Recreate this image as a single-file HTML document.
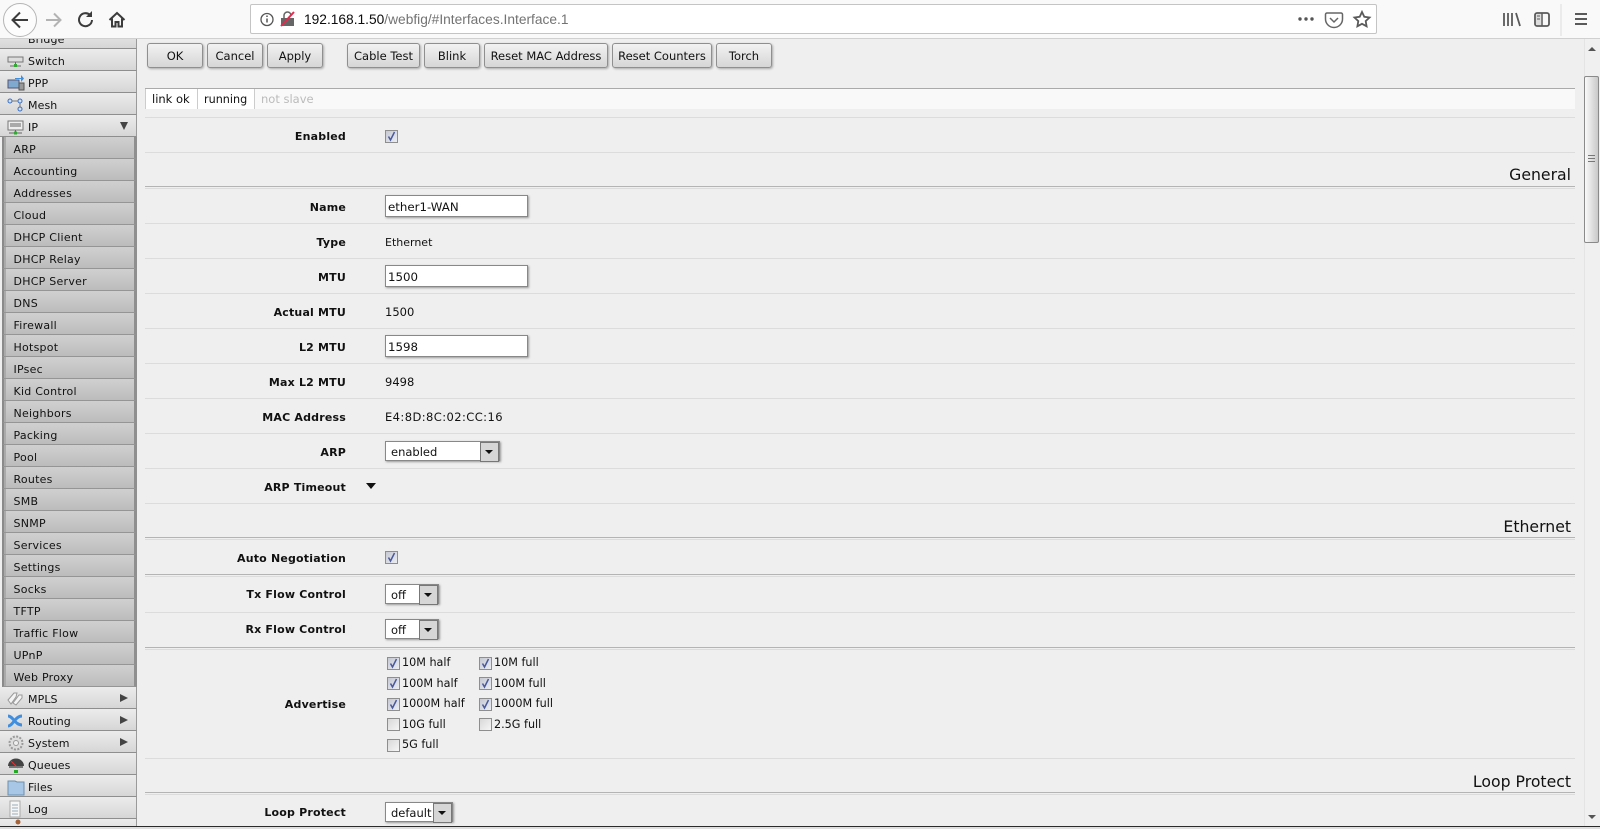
<!DOCTYPE html>
<html><head><meta charset="utf-8"><title>WebFig</title>
<style>
html,body{margin:0;padding:0;width:1600px;height:829px;overflow:hidden;background:#efefef}
body{position:relative;font:11px/14px "DejaVu Sans","Liberation Sans",sans-serif;color:#111}
div,span,svg{position:absolute;box-sizing:border-box;white-space:nowrap}
.it{left:0;width:137px;height:22px;background:linear-gradient(#ececec,#d6d6d6);border-bottom:1px solid #8e8e8e;border-right:1px solid #9a9a9a}
.it span{left:28px;top:6px;letter-spacing:.1px}
.it svg{left:7px;top:3px}
.it i{position:absolute;left:120px;top:7px;width:0;height:0;border-left:8px solid #444;border-top:4px solid transparent;border-bottom:4px solid transparent}
.sub{left:2px;width:135px;height:22px;background:linear-gradient(#d0d0d0,#bcbcbc);border-bottom:1px solid #959595;border-left:2px solid #8a8a8a;border-right:3px solid #8f8f8f;box-shadow:inset 2px 0 0 #aaa}
.sub span{left:9.500px;top:6px;letter-spacing:.25px}
.btn{top:43px;height:25px;border:1px solid #8f8f8f;border-radius:3px;background:linear-gradient(#f2f2f2,#d6d6d6);box-shadow:1px 1px 2px #aaa;text-align:center;line-height:24px;font-size:11.5px}
.ln{left:145px;width:1430px;height:1px;background:#dcdcdc}
.dl{background:#b4b4b4;height:1px;left:145px;width:1430px}
.l{left:140px;width:206px;height:14px;text-align:right;font-weight:bold;margin-top:1px;letter-spacing:.19px}
.v{left:385px;height:14px;font-size:11.5px}
.inp{left:385px;width:143px;height:22px;background:#fff;border:1px solid #888;box-shadow:1px 1px 2px #999;font-size:11.8px;line-height:22px;padding-left:2px}
.sel{left:385px;height:20px;background:#fff;border:1px solid #888;box-shadow:1px 1px 2px #999;font-size:11.5px;line-height:20px;padding-left:5px}
.sel b{position:absolute;right:0;top:0;width:17px;height:18px;background:#d6d6d6;border:1px solid #fff;outline:1px solid #777;outline-offset:-1px}
.sel b:after{content:"";position:absolute;left:4px;top:7px;border-left:4px solid transparent;border-right:4px solid transparent;border-top:4px solid #111}
.cb{width:13px;height:13px;background:linear-gradient(135deg,#d8d8d8,#f6f6f6);border:1px solid #8e8e8e}
.ck{background:linear-gradient(135deg,#c6c8d2,#eceef4)}
.h{right:29px;font-size:15.7px;line-height:20px;color:#111}
.t{height:14px;font-size:11.2px}
</style></head>
<body>

<!-- sidebar -->
<div class="it" style="top:27px;height:22px"><span>Bridge</span></div>
<div class="it" style="top:49px"><svg width="18" height="18" viewBox="0 0 18 18"><rect x="1" y="5" width="15" height="5" fill="#ddd" stroke="#777"/><path d="M8.500 10v4M3 14h11" stroke="#6a6a6a"/><rect x="7" y="12" width="3" height="3" fill="#3a3"/></svg><span>Switch</span></div>
<div class="it" style="top:71px"><svg width="18" height="18" viewBox="0 0 18 18"><rect x="1" y="6" width="11" height="8" fill="#7fa9cf" stroke="#557"/><rect x="12" y="9" width="5" height="7" fill="#999" stroke="#555"/><path d="M8 4h6V1l3 3.500-3 3.500V5H8z" fill="#3d8fe0"/></svg><span>PPP</span></div>
<div class="it" style="top:93px"><svg width="18" height="18" viewBox="0 0 18 18" fill="#cfe0f5" stroke="#3c6fc0"><circle cx="3" cy="5" r="2"/><circle cx="13" cy="5" r="2"/><circle cx="13" cy="13" r="2"/><path d="M5 5h6M13 7v4" fill="none" stroke="#777"/></svg><span>Mesh</span></div>
<div class="it" style="top:115px"><svg width="18" height="18" viewBox="0 0 18 18"><rect x="1" y="3" width="15" height="9" fill="#eee" stroke="#777"/><path d="M3 6h11M3 8h11" stroke="#666"/><path d="M8.500 12v3M2 15h13" stroke="#666"/><rect x="7" y="13.500" width="3" height="3" fill="#3a3"/></svg><span>IP</span><i style="left:120px;top:7px;border:0;border-top:8px solid #444;border-left:4px solid transparent;border-right:4px solid transparent"></i></div>

<div class="sub" style="top:137px"><span>ARP</span></div>
<div class="sub" style="top:159px"><span>Accounting</span></div>
<div class="sub" style="top:181px"><span>Addresses</span></div>
<div class="sub" style="top:203px"><span>Cloud</span></div>
<div class="sub" style="top:225px"><span>DHCP Client</span></div>
<div class="sub" style="top:247px"><span>DHCP Relay</span></div>
<div class="sub" style="top:269px"><span>DHCP Server</span></div>
<div class="sub" style="top:291px"><span>DNS</span></div>
<div class="sub" style="top:313px"><span>Firewall</span></div>
<div class="sub" style="top:335px"><span>Hotspot</span></div>
<div class="sub" style="top:357px"><span>IPsec</span></div>
<div class="sub" style="top:379px"><span>Kid Control</span></div>
<div class="sub" style="top:401px"><span>Neighbors</span></div>
<div class="sub" style="top:423px"><span>Packing</span></div>
<div class="sub" style="top:445px"><span>Pool</span></div>
<div class="sub" style="top:467px"><span>Routes</span></div>
<div class="sub" style="top:489px"><span>SMB</span></div>
<div class="sub" style="top:511px"><span>SNMP</span></div>
<div class="sub" style="top:533px"><span>Services</span></div>
<div class="sub" style="top:555px"><span>Settings</span></div>
<div class="sub" style="top:577px"><span>Socks</span></div>
<div class="sub" style="top:599px"><span>TFTP</span></div>
<div class="sub" style="top:621px"><span>Traffic Flow</span></div>
<div class="sub" style="top:643px"><span>UPnP</span></div>
<div class="sub" style="top:665px"><span>Web Proxy</span></div>

<div class="it" style="top:687px"><svg width="18" height="18" viewBox="0 0 18 18" fill="#f4f4f4" stroke="#999"><path d="M1 10l6-7h3l-1 4-5 7zM6 13l6-8h3l0 3-6 7z"/></svg><span>MPLS</span><i></i></div>
<div class="it" style="top:709px"><svg width="18" height="18" viewBox="0 0 18 18" fill="none" stroke="#3f8ee0" stroke-width="3"><path d="M1 4c5 0 7 9 14 9M1 14c5 0 7-10 14-10"/></svg><span>Routing</span><i></i></div>
<div class="it" style="top:731px"><svg width="18" height="18" viewBox="0 0 18 18" fill="#ddd" stroke="#999"><circle cx="9" cy="9" r="6.500" stroke-width="2" stroke-dasharray="2 1.400"/><circle cx="9" cy="9" r="2.500" fill="#eee"/></svg><span>System</span><i></i></div>
<div class="it" style="top:753px"><svg width="18" height="18" viewBox="0 0 18 18"><path d="M1 10a8 7.500 0 0 1 16 0z" fill="#444"/><path d="M4 5l7 7" stroke="#e33"/><path d="M2 10h14v2H2z" fill="#777"/><rect x="7" y="14" width="4" height="3" fill="#2a2"/></svg><span>Queues</span></div>
<div class="it" style="top:775px"><svg width="18" height="18" viewBox="0 0 18 18"><path d="M1 3h7l2 1h7v13H1z" fill="#a8c7e6" stroke="#6d8fae"/></svg><span>Files</span></div>
<div class="it" style="top:797px"><svg width="18" height="18" viewBox="0 0 18 18"><rect x="3" y="1" width="10" height="16" fill="#f6f6f6" stroke="#aaa"/><path d="M5 5h6M5 8h6M5 11h6M5 14h6" stroke="#9ab"/></svg><span>Log</span></div>
<div class="it" style="top:819px"><svg width="18" height="18" viewBox="0 0 18 18" style="top:0"><circle cx="11" cy="3" r="2.500" fill="#a5633a"/></svg></div>

<!-- buttons -->
<div class="btn" style="left:147px;width:56px">OK</div>
<div class="btn" style="left:207px;width:56px">Cancel</div>
<div class="btn" style="left:267px;width:56px">Apply</div>
<div class="btn" style="left:347px;width:73px">Cable Test</div>
<div class="btn" style="left:424px;width:56px">Blink</div>
<div class="btn" style="left:484px;width:124px">Reset MAC Address</div>
<div class="btn" style="left:612px;width:100px">Reset Counters</div>
<div class="btn" style="left:716px;width:56px">Torch</div>

<!-- status -->
<div style="left:145px;top:88px;width:1430px;height:21px;background:#f9f9f9;border-top:1px solid #aaa"></div>
<div style="left:145px;top:89px;width:53px;height:20px;background:#fff;border-left:1px solid #ccc;border-right:1px solid #ccc"></div>
<div style="left:198px;top:89px;width:57px;height:20px;background:#fff;border-right:1px solid #ccc"></div>
<div class="t" style="left:152px;top:92px;font-size:11.5px">link ok</div>
<div class="t" style="left:204px;top:93px">running</div>
<div class="t" style="left:261px;top:92px;color:#bbb;font-size:11.5px">not slave</div>

<!-- lines -->
<div class="ln" style="top:117px"></div>
<div class="ln" style="top:152px"></div>
<div class="dl" style="top:186px"></div><div class="ln" style="top:188px"></div>
<div class="ln" style="top:223px"></div>
<div class="ln" style="top:258px"></div>
<div class="ln" style="top:293px"></div>
<div class="ln" style="top:328px"></div>
<div class="ln" style="top:363px"></div>
<div class="ln" style="top:398px"></div>
<div class="ln" style="top:433px"></div>
<div class="ln" style="top:468px"></div>
<div class="ln" style="top:503px"></div>
<div class="dl" style="top:537px"></div><div class="ln" style="top:539px"></div>
<div class="dl" style="top:574px"></div><div class="ln" style="top:576px"></div>
<div class="ln" style="top:612px"></div>
<div class="dl" style="top:647px"></div><div class="ln" style="top:649px"></div>
<div class="ln" style="top:758px"></div>
<div class="dl" style="top:792px"></div><div class="ln" style="top:794px"></div>

<!-- headers -->
<div class="h" style="top:165px">General</div>
<div class="h" style="top:517px">Ethernet</div>
<div class="h" style="top:772px">Loop Protect</div>

<!-- labels -->
<div class="l" style="top:129px">Enabled</div>
<div class="cb ck" style="left:385px;top:130px"><svg width="11" height="11" viewBox="0 0 11 11" style="left:0;top:0"><path d="M2.500 5.500l2 3.500L8.500 1" fill="none" stroke="#4a5a9c" stroke-width="1.500"/></svg></div>
<div class="l" style="top:200px">Name</div>
<div class="inp" style="top:195px">ether1-WAN</div>
<div class="l" style="top:235px">Type</div><div class="v" style="top:236px;font-size:11px">Ethernet</div>
<div class="l" style="top:270px">MTU</div>
<div class="inp" style="top:265px">1500</div>
<div class="l" style="top:305px">Actual MTU</div><div class="v" style="top:305px">1500</div>
<div class="l" style="top:340px">L2 MTU</div>
<div class="inp" style="top:335px">1598</div>
<div class="l" style="top:375px">Max L2 MTU</div><div class="v" style="top:375px">9498</div>
<div class="l" style="top:410px">MAC Address</div><div class="v" style="top:410px;letter-spacing:.42px">E4:8D:8C:02:CC:16</div>
<div class="l" style="top:445px">ARP</div>
<div class="sel" style="top:441px;width:115px">enabled<b></b></div>
<div class="l" style="top:480px">ARP Timeout</div>
<div style="left:366px;top:483px;width:0;height:0;border-left:5px solid transparent;border-right:5px solid transparent;border-top:6px solid #111"></div>
<div class="l" style="top:551px">Auto Negotiation</div>
<div class="cb ck" style="left:385px;top:551px"><svg width="11" height="11" viewBox="0 0 11 11" style="left:0;top:0"><path d="M2.500 5.500l2 3.500L8.500 1" fill="none" stroke="#4a5a9c" stroke-width="1.500"/></svg></div>
<div class="l" style="top:587px">Tx Flow Control</div>
<div class="sel" style="top:584px;width:54px">off<b></b></div>
<div class="l" style="top:622px">Rx Flow Control</div>
<div class="sel" style="top:619px;width:54px">off<b></b></div>
<div class="l" style="top:697px">Advertise</div>

<!-- advertise -->
<div class="cb ck" style="left:387px;top:657px"><svg width="11" height="11" viewBox="0 0 11 11" style="left:0;top:0"><path d="M2.500 5.500l2 3.500L8.500 1" fill="none" stroke="#4a5a9c" stroke-width="1.500"/></svg></div>
<div class="t" style="left:402px;top:656px">10M half</div>
<div class="cb ck" style="left:479px;top:657px"><svg width="11" height="11" viewBox="0 0 11 11" style="left:0;top:0"><path d="M2.500 5.500l2 3.500L8.500 1" fill="none" stroke="#4a5a9c" stroke-width="1.500"/></svg></div>
<div class="t" style="left:494px;top:656px">10M full</div>
<div class="cb ck" style="left:387px;top:677px"><svg width="11" height="11" viewBox="0 0 11 11" style="left:0;top:0"><path d="M2.500 5.500l2 3.500L8.500 1" fill="none" stroke="#4a5a9c" stroke-width="1.500"/></svg></div>
<div class="t" style="left:402px;top:677px">100M half</div>
<div class="cb ck" style="left:479px;top:677px"><svg width="11" height="11" viewBox="0 0 11 11" style="left:0;top:0"><path d="M2.500 5.500l2 3.500L8.500 1" fill="none" stroke="#4a5a9c" stroke-width="1.500"/></svg></div>
<div class="t" style="left:494px;top:677px">100M full</div>
<div class="cb ck" style="left:387px;top:698px"><svg width="11" height="11" viewBox="0 0 11 11" style="left:0;top:0"><path d="M2.500 5.500l2 3.500L8.500 1" fill="none" stroke="#4a5a9c" stroke-width="1.500"/></svg></div>
<div class="t" style="left:402px;top:697px">1000M half</div>
<div class="cb ck" style="left:479px;top:698px"><svg width="11" height="11" viewBox="0 0 11 11" style="left:0;top:0"><path d="M2.500 5.500l2 3.500L8.500 1" fill="none" stroke="#4a5a9c" stroke-width="1.500"/></svg></div>
<div class="t" style="left:494px;top:697px">1000M full</div>
<div class="cb" style="left:387px;top:718px"></div>
<div class="t" style="left:402px;top:718px">10G full</div>
<div class="cb" style="left:479px;top:718px"></div>
<div class="t" style="left:494px;top:718px">2.5G full</div>
<div class="cb" style="left:387px;top:739px"></div>
<div class="t" style="left:402px;top:738px">5G full</div>

<div class="l" style="top:805px">Loop Protect</div>
<div class="sel" style="top:802px;width:68px">default<b></b></div>

<!-- scrollbar -->
<div style="left:1584px;top:39px;width:16px;height:787px;background:#f0f0f0;border-left:1px solid #e4e4e4"></div>
<div style="left:1588px;top:47px;width:0;height:0;border-left:4px solid transparent;border-right:4px solid transparent;border-bottom:4px solid #555"></div>
<div style="left:1588px;top:815px;width:0;height:0;border-left:4px solid transparent;border-right:4px solid transparent;border-top:4px solid #555"></div>
<div style="left:1584px;top:76px;width:15px;height:167px;background:linear-gradient(90deg,#fafafa,#c8c8c8);border:1px solid #8a8a8a;border-radius:2px"></div>
<div style="left:1588px;top:155px;width:7px;height:7px;border-top:1px solid #777;border-bottom:1px solid #777"></div>
<div style="left:1588px;top:158px;width:7px;height:1px;background:#777"></div>

<!-- bottom edge -->
<div style="left:0;top:826px;width:1600px;height:1px;background:#2b2b2b"></div>
<div style="left:0;top:827px;width:1600px;height:2px;background:#dfdfdf"></div>

<!-- browser toolbar -->
<div style="left:0;top:0;width:1600px;height:39px;background:#f9f9fa;border-bottom:1px solid #d0d0d0"></div>
<div style="left:3px;top:3px;width:34px;height:34px;border-radius:50%;background:#fcfcfc;border:1px solid #b5b5b5"></div>
<svg style="left:0;top:0" width="140" height="39" viewBox="0 0 140 39">
<path d="M28 20H13M20 12.500L12.500 20l7.500 7.500" fill="none" stroke="#3c3c3c" stroke-width="2"/>
<path d="M46 20h14M54 13.500L60.500 20 54 26.500" fill="none" stroke="#b3b3b3" stroke-width="2"/>
<path d="M92 20a6.500 6.500 0 1 1-2-5" fill="none" stroke="#3c3c3c" stroke-width="2"/>
<path d="M92 11v6h-6z" fill="#3c3c3c"/>
<path d="M109.500 20l7.500-7 7.500 7M112 18.500V26.500h3.500V22h3v4.500h3.500v-8" fill="none" stroke="#3c3c3c" stroke-width="2"/>
</svg>
<div style="left:250px;top:4px;width:1127px;height:30px;background:#fff;border:1px solid #c4c4c4;border-radius:2px"></div>
<svg style="left:258px;top:10px" width="40" height="20" viewBox="0 0 40 20">
<circle cx="9" cy="9.500" r="6" fill="none" stroke="#555" stroke-width="1.300"/>
<path d="M9 8.500v4M9 5.500v1.500" stroke="#555" stroke-width="1.500"/>
<path d="M23 8h13v8H23z" fill="#666"/><path d="M26 8V5.500a3.500 3.500 0 0 1 7 0" fill="none" stroke="#666" stroke-width="1.500"/>
<path d="M23 16L36 2" stroke="#e8274b" stroke-width="2"/>
</svg>
<div style="left:304px;top:10px;height:20px;font:13.75px/20px 'Liberation Sans',sans-serif;color:#0c0c0d">192.168.1.50<span style="position:static;color:#737373">/webfig/#Interfaces.Interface.1</span></div>
<svg style="left:1290px;top:4px" width="310" height="32" viewBox="0 0 310 32">
<circle cx="10" cy="15" r="1.700" fill="#555"/><circle cx="16" cy="15" r="1.700" fill="#555"/><circle cx="22" cy="15" r="1.700" fill="#555"/>
<path d="M37 9h14a1.500 1.500 0 0 1 1.500 1.500V15a8.500 8.500 0 0 1-17 0v-4.500A1.500 1.500 0 0 1 37 9z" fill="none" stroke="#666" stroke-width="1.500"/>
<path d="M40 14l4 4 4-4" fill="none" stroke="#666" stroke-width="1.500"/>
<path d="M72 8l2.300 4.800 5.200.7-3.800 3.600.9 5.200-4.600-2.500-4.600 2.500.9-5.200-3.800-3.600 5.200-.7z" fill="none" stroke="#5a5a5a" stroke-width="1.800"/>
<path d="M214 9v13M218 9v13M222 9v13M226 9l4 13" fill="none" stroke="#5a5a5a" stroke-width="1.800"/>
<rect x="245" y="9" width="14" height="13" rx="2" fill="none" stroke="#5a5a5a" stroke-width="1.800"/><rect x="246" y="10" width="5" height="11" fill="#ddd"/><path d="M252 9v13" stroke="#5a5a5a" stroke-width="1.500"/><path d="M247 12h3M247 15h3" stroke="#5a5a5a"/>
<path d="M271 0v32" stroke="#ddd"/>
<path d="M285 10h12M285 15h12M285 20h12" stroke="#5a5a5a" stroke-width="2"/>
</svg>
</body></html>
